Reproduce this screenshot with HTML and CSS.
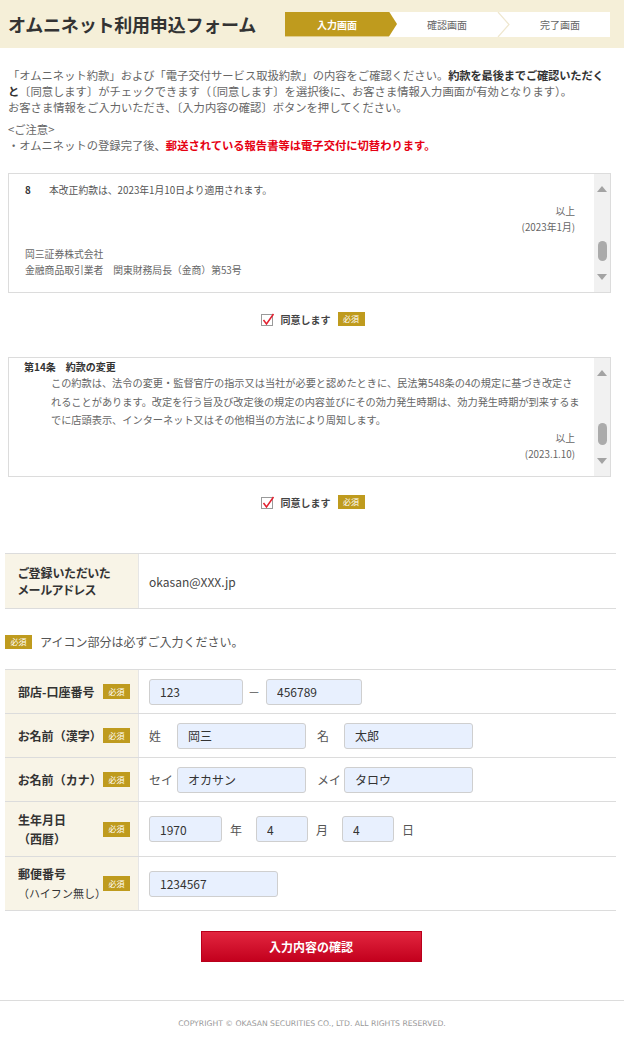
FILE: index.html
```html
<!DOCTYPE html>
<html lang="ja">
<head>
<meta charset="utf-8">
<title>オムニネット利用申込フォーム</title>
<link rel="stylesheet" href="styles.css">
</head>
<body>
<header class="top">
  <h1 class="title">オムニネット利用申込フォーム</h1>
  <ol class="steps">
    <li class="step step-current">入力画面</li>
    <li class="step">確認画面</li>
    <li class="step-sep"><svg width="13" height="25" viewBox="0 0 13 25"><polyline points="1,0 12,12.5 1,25" fill="none" stroke="#efe7cf" stroke-width="1.2"/></svg></li>
    <li class="step">完了画面</li>
  </ol>
</header>

<main>
  <section class="intro">
    <p>「オムニネット約款」および「電子交付サービス取扱約款」の内容をご確認ください。<strong>約款を最後までご確認いただく<br>と</strong>〔同意します〕がチェックできます（〔同意します〕を選択後に、お客さま情報入力画面が有効となります）。<br>お客さま情報をご入力いただき、〔入力内容の確認〕ボタンを押してください。</p>
    <p class="note-title">&lt;ご注意&gt;</p>
    <p>・オムニネットの登録完了後、<span class="alert">郵送されている報告書等は電子交付に切替わります。</span></p>
  </section>

  <div class="terms">
    <div class="terms-body terms-body-1">
      <p class="clause"><span class="clause-no">8</span>本改正約款は、2023年1月10日より適用されます。</p>
      <p class="end end-1">以上</p>
      <p class="end">(2023年1月)</p>
      <p class="company company-first">岡三証券株式会社</p>
      <p class="company">金融商品取引業者　関東財務局長（金商）第53号</p>
    </div>
    <div class="scrollbar">
      <div class="sb-btn"><span class="arrow-up"></span></div>
      <div class="sb-track"><span class="thumb thumb-1"></span></div>
      <div class="sb-btn"><span class="arrow-down"></span></div>
    </div>
  </div>

  <div class="agree agree-1">
    <svg class="check" width="15" height="15" viewBox="0 0 15 15"><rect x="1.5" y="2.5" width="11" height="11" fill="#fff" stroke="#9a9a9a"/><polyline points="3.5,8 6.5,12 13.5,2" fill="none" stroke="#e2202f" stroke-width="1.5"/></svg>
    <span class="agree-text">同意します</span>
    <span class="badge">必須</span>
  </div>

  <div class="terms terms-2">
    <div class="terms-body terms-body-2">
      <p class="article">第14条　約款の変更</p>
      <p class="article-text">この約款は、法令の変更・監督官庁の指示又は当社が必要と認めたときに、民法第548条の4の規定に基づき改定さ<br>れることがあります。改定を行う旨及び改定後の規定の内容並びにその効力発生時期は、効力発生時期が到来するま<br>でに店頭表示、インターネット又はその他相当の方法により周知します。</p>
      <p class="end end-2">以上</p>
      <p class="end">(2023.1.10)</p>
    </div>
    <div class="scrollbar">
      <div class="sb-btn"><span class="arrow-up"></span></div>
      <div class="sb-track"><span class="thumb thumb-2"></span></div>
      <div class="sb-btn"><span class="arrow-down"></span></div>
    </div>
  </div>

  <div class="agree agree-2">
    <svg class="check" width="15" height="15" viewBox="0 0 15 15"><rect x="1.5" y="2.5" width="11" height="11" fill="#fff" stroke="#9a9a9a"/><polyline points="3.5,8 6.5,12 13.5,2" fill="none" stroke="#e2202f" stroke-width="1.5"/></svg>
    <span class="agree-text">同意します</span>
    <span class="badge">必須</span>
  </div>

  <div class="table table-mail">
    <div class="row row-mail">
      <div class="label"><span class="label-text">ご登録いただいた<br>メールアドレス</span></div>
      <div class="value mail">okasan@XXX.jp</div>
    </div>
  </div>

  <p class="required-note"><span class="badge">必須</span><span>アイコン部分は必ずご入力ください。</span></p>

  <div class="table table-form">
    <div class="row row-std">
      <div class="label"><span class="label-text">部店-口座番号</span><span class="badge">必須</span></div>
      <div class="value">
        <input class="field w94" type="text" value="123" readonly>
        <span class="dash">－</span>
        <input class="field w96" type="text" value="456789" readonly>
      </div>
    </div>
    <div class="row row-std">
      <div class="label"><span class="label-text">お名前<span class="paren">（漢字）</span></span><span class="badge">必須</span></div>
      <div class="value">
        <span class="prefix">姓</span>
        <input class="field w129" type="text" value="岡三" readonly>
        <span class="prefix prefix-2">名</span>
        <input class="field w129" type="text" value="太郎" readonly>
      </div>
    </div>
    <div class="row row-std">
      <div class="label"><span class="label-text">お名前<span class="paren">（カナ）</span></span><span class="badge">必須</span></div>
      <div class="value">
        <span class="prefix">セイ</span>
        <input class="field w129" type="text" value="オカサン" readonly>
        <span class="prefix prefix-2">メイ</span>
        <input class="field w129" type="text" value="タロウ" readonly>
      </div>
    </div>
    <div class="row row-birth">
      <div class="label"><span class="label-text">生年月日<br><span class="paren">（西暦）</span></span><span class="badge">必須</span></div>
      <div class="value">
        <input class="field w73" type="text" value="1970" readonly>
        <span class="suffix">年</span>
        <input class="field w52" type="text" value="4" readonly>
        <span class="suffix">月</span>
        <input class="field w52" type="text" value="4" readonly>
        <span class="suffix">日</span>
      </div>
    </div>
    <div class="row row-zip">
      <div class="label"><span class="label-text">郵便番号<br><span class="sub">（ハイフン無し）</span></span><span class="badge">必須</span></div>
      <div class="value">
        <input class="field w129" type="text" value="1234567" readonly>
      </div>
    </div>
  </div>

  <div class="actions">
    <button class="confirm" type="button">入力内容の確認</button>
  </div>
</main>

<footer class="footer">
  <p class="copyright">COPYRIGHT © OKASAN SECURITIES CO., LTD. ALL RIGHTS RESERVED.</p>
</footer>
</body>
</html>
```

FILE: styles.css
```css
* { box-sizing: border-box; }

body {
  margin: 0;
  background: #fff;
  color: #333;
  font-family: "Noto Sans CJK JP", "Noto Sans", sans-serif;
}

p { margin: 0; }

/* header */
.top {
  display: flex;
  align-items: center;
  justify-content: space-between;
  height: 48px;
  padding: 0 14px 0 8px;
  background: #f5efd8;
}

.title {
  margin: 0;
  font-size: 18px;
  font-weight: bold;
  color: #333;
  letter-spacing: -0.2px;
}

.steps {
  display: flex;
  height: 25px;
  margin: 0;
  padding: 0;
  list-style: none;
  background: #fff;
}

.step {
  display: flex;
  align-items: center;
  justify-content: center;
  width: 100px;
  font-size: 10px;
  color: #666;
}

.step-current {
  width: 112px;
  padding-right: 8px;
  background: #bf9b1e;
  color: #fff;
  font-weight: bold;
  clip-path: polygon(0 0, 104px 0, 112px 50%, 104px 100%, 0 100%);
}

.step-sep {
  display: flex;
  width: 13px;
}

/* intro */
.intro {
  padding: 19px 8px 0 8px;
  font-size: 11.3px;
  line-height: 16px;
  color: #666;
}

.intro strong {
  font-weight: bold;
  color: #333;
  letter-spacing: -0.2px;
}

.note-title {
  margin-top: 6px;
}

.alert {
  color: #e60012;
  font-weight: bold;
}

/* terms boxes */
.terms {
  display: flex;
  height: 120px;
  margin: 20px 13px 0 8px;
  border: 1px solid #dcdcdc;
}

.terms-2 {
  margin-top: 28px;
}

.terms-body {
  flex: 1;
  overflow: hidden;
  color: #666;
  font-size: 9.8px;
  line-height: 16px;
  padding: 0 19px 0 16px;
}

.terms-body-1 {
  padding-top: 8px;
}

.clause {
  display: flex;
  color: #555;
}

.clause-no {
  width: 24px;
  font-weight: bold;
  color: #333;
}

.end {
  text-align: right;
}

.end-1 {
  margin-top: 5px;
}

.company-first {
  margin-top: 11px;
}

.terms-body-2 {
  padding-left: 15px;
}

.article {
  padding-top: 1px;
  font-weight: bold;
  color: #333;
  font-size: 10px;
  line-height: 15px;
}

.article-text {
  margin: 0 0 0 27px;
  font-size: 10.2px;
  line-height: 18.5px;
  white-space: nowrap;
}

.end-2 {
  margin-top: 0;
}

.scrollbar {
  display: flex;
  flex-direction: column;
  width: 16px;
  background: #f1f1f1;
}

.sb-btn {
  display: flex;
  align-items: center;
  justify-content: center;
  height: 30px;
}

.arrow-up,
.arrow-down {
  width: 0;
  height: 0;
  border-left: 5px solid transparent;
  border-right: 5px solid transparent;
}

.arrow-up { border-bottom: 6px solid #a3a3a3; }
.arrow-down { border-top: 6px solid #a3a3a3; }

.sb-track {
  flex: 1;
  display: flex;
  flex-direction: column;
  justify-content: flex-end;
  align-items: center;
}

.thumb {
  width: 9px;
  border-radius: 5px;
  background: #ababab;
}

.thumb-1 { height: 20px; margin-bottom: 1px; }
.thumb-2 { height: 22px; margin-bottom: 1px; }

/* agree */
.agree {
  display: flex;
  align-items: center;
  justify-content: center;
  gap: 6px;
  height: 20px;
  margin-top: 16px;
}

.agree-2 {
  margin-top: 15px;
}

.agree-text {
  font-size: 10px;
  font-weight: bold;
  color: #444;
  margin-right: 1px;
}

.badge {
  display: inline-flex;
  align-items: center;
  justify-content: center;
  flex: none;
  width: 27px;
  height: 14px;
  background: #bf9b1e;
  color: #fff;
  font-size: 8px;
  font-weight: normal;
  line-height: 1;
}

/* tables */
.table {
  margin: 0 8px 0 5px;
  border-top: 1px solid #dcdcdc;
}

.table-mail {
  margin-top: 41px;
}

.row {
  display: grid;
  grid-template-columns: 134px 1fr;
  border-bottom: 1px solid #dcdcdc;
}

.row-mail { height: 55px; }
.row-std { height: 44px; }
.row-birth { height: 55px; }
.row-zip { height: 54px; }

.label {
  display: flex;
  align-items: center;
  justify-content: space-between;
  padding: 0 8px 0 13px;
  background: #f8f4e7;
  border-right: 1px solid #e6e6e6;
}

.label-text {
  font-size: 12px;
  font-weight: bold;
  line-height: 19px;
  color: #333;
  font-feature-settings: "palt";
}

.row-mail .label-text {
  line-height: 17px;
}

.label .badge {
  height: 15px;
}

.paren {
  font-feature-settings: normal;
}

.sub {
  font-size: 11px;
  font-weight: normal;
  font-feature-settings: normal;
}

.value {
  display: flex;
  align-items: center;
  padding-left: 10px;
  font-size: 12px;
  color: #555;
}

.mail {
  color: #444;
}

.required-note {
  display: flex;
  align-items: center;
  gap: 8px;
  margin: 25px 0 0 5px;
  font-size: 12px;
  color: #555;
  line-height: 16px;
}

.table-form {
  margin-top: 19px;
}

.field {
  height: 26px;
  padding: 0 10px;
  border: 1px solid #cfcfcf;
  border-radius: 3px;
  background: #e8f0fe;
  font-family: "Noto Sans CJK JP", "Noto Sans", sans-serif;
  font-size: 12px;
  color: #333;
  outline: none;
}

.w94 { width: 94px; }
.w96 { width: 96px; }
.w129 { width: 129px; }
.w73 { width: 73px; }
.w52 { width: 52px; }

.dash {
  margin: 0 6px 0 5px;
  color: #555;
}

.prefix {
  width: 28px;
  color: #555;
}

.prefix-2 {
  width: 27px;
  margin-left: 11px;
}

.suffix {
  margin: 0 14px 0 8px;
  color: #555;
}

/* actions */
.actions {
  display: flex;
  justify-content: center;
  margin-top: 20px;
  padding-right: 2px;
}

.confirm {
  width: 221px;
  height: 31px;
  border: 1px solid #b9001b;
  background: linear-gradient(#e2263f, #c3001d);
  color: #fff;
  font-family: "Noto Sans CJK JP", "Noto Sans", sans-serif;
  font-size: 12px;
  font-weight: bold;
}

/* footer */
.footer {
  margin-top: 38px;
  border-top: 1px solid #dcdcdc;
  padding-top: 17px;
}

.copyright {
  text-align: center;
  font-family: "DejaVu Sans", sans-serif;
  font-size: 7.7px;
  color: #999;
  line-height: 12px;
}
```
